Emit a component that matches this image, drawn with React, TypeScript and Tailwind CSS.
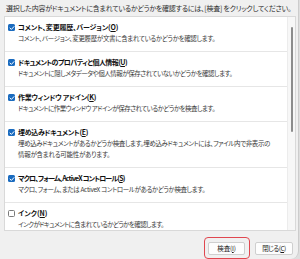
import React from "react";

type Line = { text: string; tr: string };
type Item = {
  title: string;
  key: string;
  titleTr: string;
  desc: Line[];
  checked: boolean;
};

const items: Item[] = [
  {
    title: "コメント、変更履歴、バージョン(",
    key: "O",
    titleTr: "tracking-[-0.18px]",
    desc: [{ text: "コメント、バージョン、変更履歴が文書に含まれているかどうかを確認します。", tr: "tracking-[-0.34px]" }],
    checked: true,
  },
  {
    title: "ドキュメントのプロパティと個人情報(",
    key: "U",
    titleTr: "tracking-[-0.58px]",
    desc: [{ text: "ドキュメントに隠しメタデータや個人情報が保存されていないかどうかを確認します。", tr: "tracking-[-0.46px]" }],
    checked: true,
  },
  {
    title: "作業ウィンドウ アドイン(",
    key: "K",
    titleTr: "tracking-[-0.3px]",
    desc: [{ text: "ドキュメントに作業ウィンドウ アドインが保存されているかどうかを検査します。", tr: "tracking-[-0.52px]" }],
    checked: true,
  },
  {
    title: "埋め込みドキュメント(",
    key: "E",
    titleTr: "tracking-[-0.35px]",
    desc: [
      { text: "埋め込みドキュメントがあるかどうか検査します。埋め込みドキュメントには、ファイル内で非表示の", tr: "tracking-[-0.4px]" },
      { text: "情報が含まれる可能性があります。", tr: "tracking-[-0.27px]" },
    ],
    checked: true,
  },
  {
    title: "マクロ、フォーム、ActiveX コントロール(",
    key: "S",
    titleTr: "tracking-[-0.85px]",
    desc: [{ text: "マクロ、フォーム、または ActiveX コントロールがあるかどうか検査します。", tr: "tracking-[-0.38px]" }],
    checked: true,
  },
  {
    title: "インク(",
    key: "N",
    titleTr: "tracking-[0px]",
    desc: [{ text: "インクがドキュメントに含まれているかどうかを確認します。", tr: "tracking-[-0.62px]" }],
    checked: false,
  },
];

function Check({ checked }: { checked: boolean }) {
  if (checked) {
    return (
      <div className="w-[7px] h-[7px] rounded-[1.5px] bg-[#1a6bbf] flex items-center justify-center">
        <svg width="6" height="6" viewBox="0 0 6 6">
          <path d="M1 3.1 L2.4 4.4 L5 1.6" fill="none" stroke="white" strokeWidth="1" strokeLinecap="round" strokeLinejoin="round" />
        </svg>
      </div>
    );
  }
  return <div className="w-[7px] h-[7px] rounded-[1.5px] border border-[#7a7a7a] bg-white" />;
}

export default function App() {
  return (
    <div
      className="w-[300px] h-[259px] overflow-hidden bg-[#dedede] [font-feature-settings:'palt']"
      style={{ fontFamily: '"Noto Sans CJK JP", "Noto Sans", sans-serif' }}
    >
      <div className="w-[299px] h-[259px] bg-[#f0f0f0] border-r border-[#cccccc] rounded-br-[8px] flex flex-col">
        <p className="h-[16px] pl-[6px] pt-[3px] text-[7px] leading-[10px] tracking-[-0.23px] text-[#2e2e2e] whitespace-nowrap">
          選択した内容がドキュメントに含まれているかどうかを確認するには、[検査] をクリックしてください。
        </p>
        <div className="ml-[4px] w-[292px] h-[215px] border border-[#d9d9d9] bg-white flex overflow-hidden">
          <div className="flex-1 min-w-0">
            {items.map((it, i) => (
              <div key={i} className="flex gap-[3px] pl-[3px] pt-[4px] pb-[7px] border-b border-[#e6e6e6]">
                <div className="mt-[3px] shrink-0">
                  <Check checked={it.checked} />
                </div>
                <div className="min-w-0">
                  <div className={`text-[7px] leading-[12px] font-bold text-[#111] whitespace-nowrap ${it.titleTr}`}>
                    {it.title}
                    <span className="underline">{it.key}</span>)
                  </div>
                  {it.desc.map((d, j) => (
                    <div key={j} className={`text-[6.5px] leading-[11px] text-[#3a3a3a] whitespace-nowrap ${d.tr}`}>
                      {d.text}
                    </div>
                  ))}
                </div>
              </div>
            ))}
          </div>
          <div className="w-[8px] shrink-0 border-l border-[#ececec] bg-[#f7f7f7] flex justify-center pt-[10px]">
            <div className="w-[2px] h-[105px] rounded-full bg-[#8c8c8c]" />
          </div>
        </div>
        <div className="flex justify-end gap-[10px] pt-[11px] pr-[5px]">
          <div className="relative">
            <div className="absolute -top-[5px] -bottom-[4px] -left-[4px] -right-[5px] border-[1.5px] border-[#e0474f] rounded-[4px]" />
            <button className="w-[37px] h-[13px] bg-[#fdfdfd] border border-[#cfcfcf] rounded-[2px] text-[6.5px] leading-[11px] tracking-[-0.2px] text-[#1a1a1a] flex items-center justify-center">
              検査(<span className="underline">I</span>)
            </button>
          </div>
          <button className="w-[38px] h-[13px] bg-[#fdfdfd] border border-[#cfcfcf] rounded-[2px] text-[6.5px] leading-[11px] tracking-[-0.5px] text-[#1a1a1a] flex items-center justify-center">
            閉じる(<span className="underline">C</span>)
          </button>
        </div>
      </div>
    </div>
  );
}
